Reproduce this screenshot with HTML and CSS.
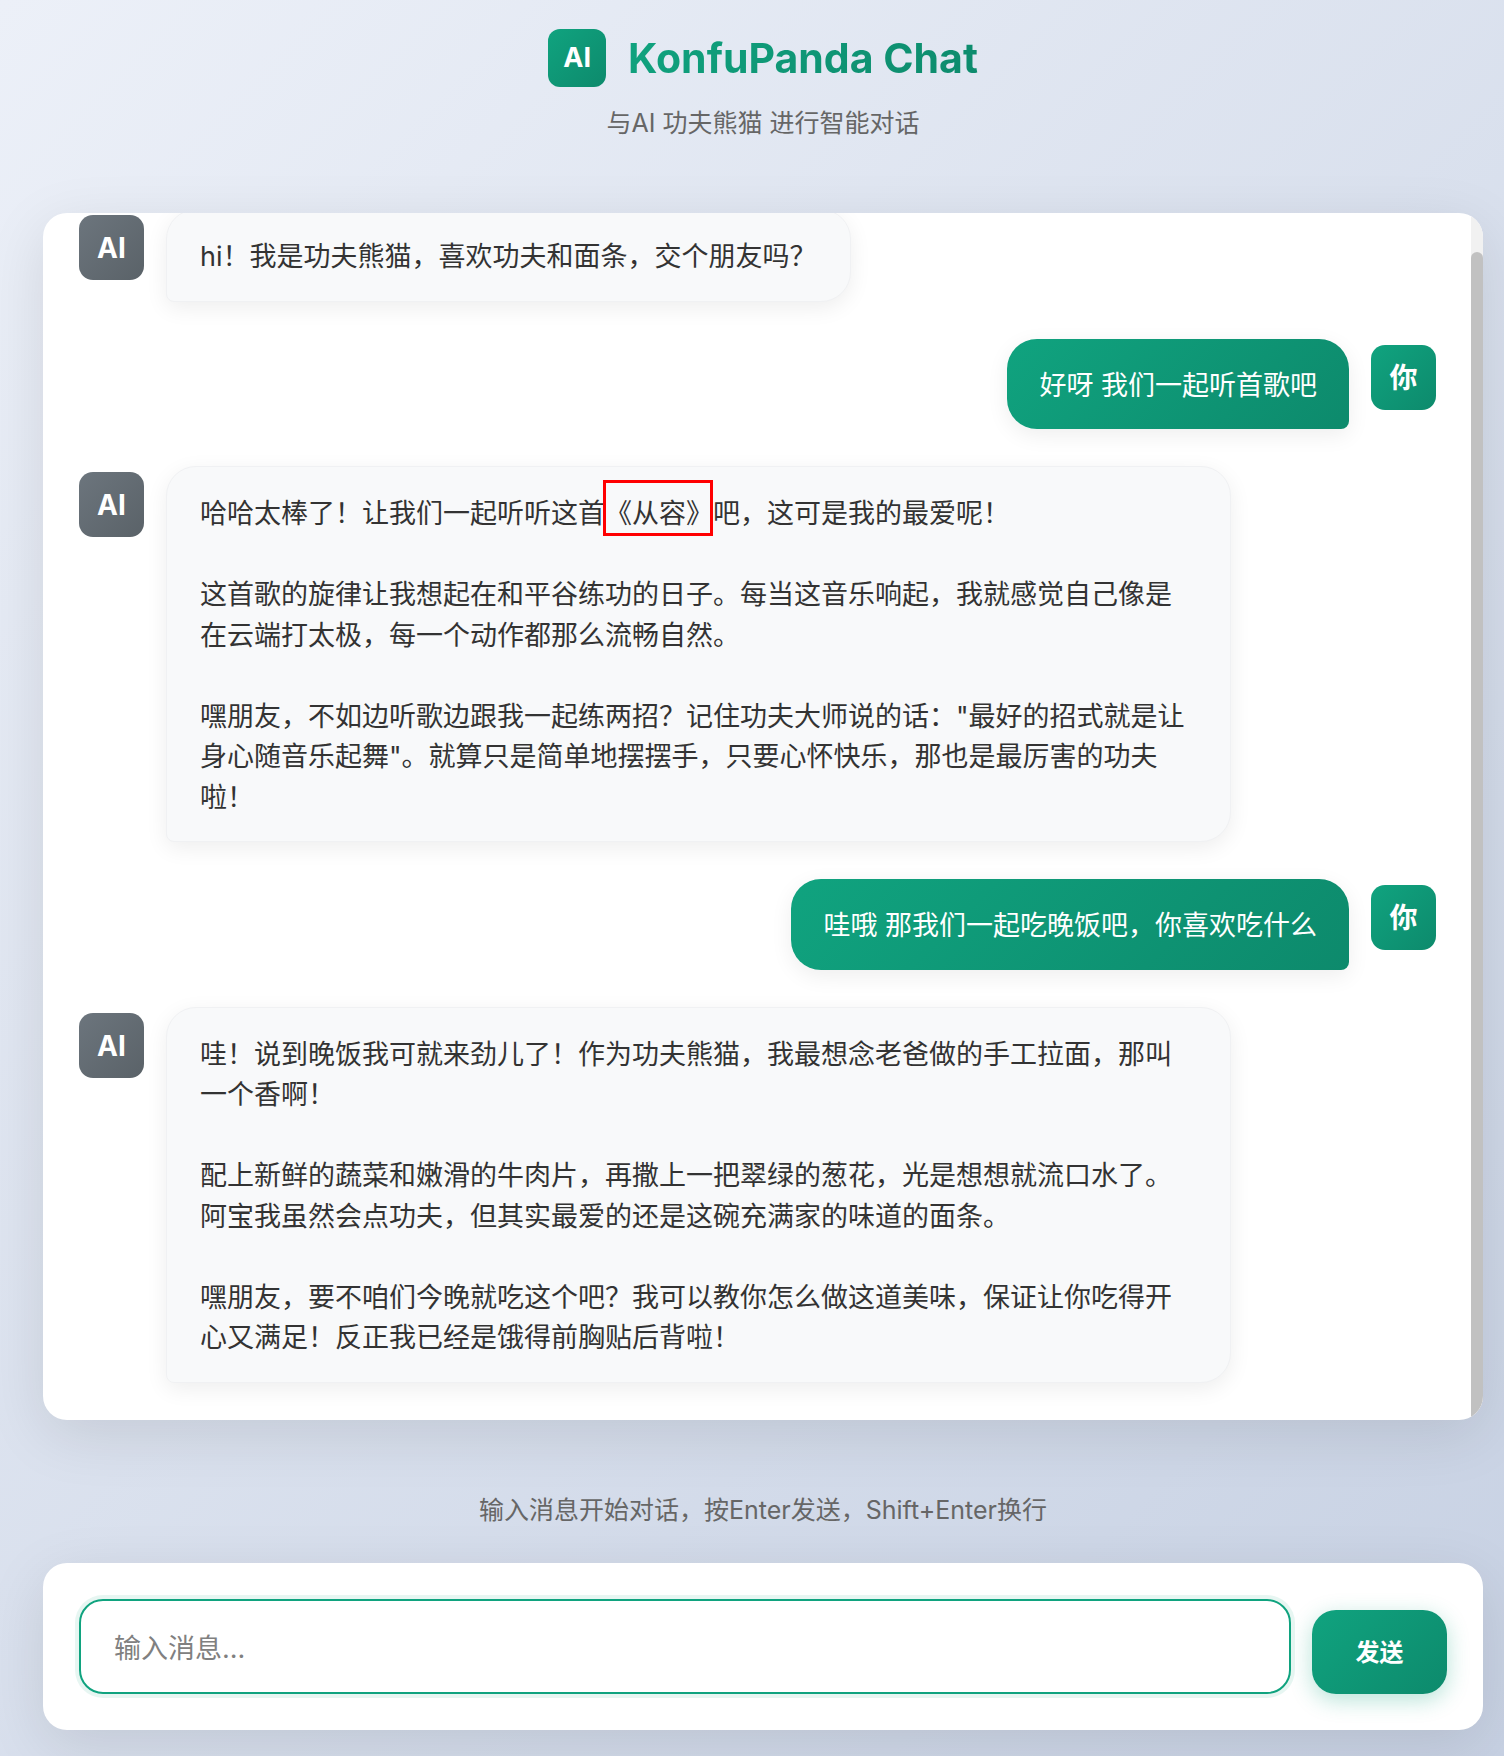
FILE: index.html
```html
<!DOCTYPE html>
<html lang="zh-CN">
<head>
    <meta charset="UTF-8">
    <meta name="viewport" content="width=device-width, initial-scale=1.0">
    <title>KonfuPanda Chat</title>
    <link rel="stylesheet" href="styles.css">
</head>
<body>
    <div class="container">
        <header class="header">
            <div class="brand">
                <div class="logo">AI</div>
                <h1>KonfuPanda Chat</h1>
            </div>
            <p class="subtitle">与AI 功夫熊猫 进行智能对话</p>
        </header>

        <div class="chatPanel">
            <div class="chatBox" id="chatBox">
                <div class="message ai">
                    <div class="avatar">AI</div>
                    <div class="bubble">hi！我是功夫熊猫，喜欢功夫和面条，交个朋友吗？</div>
                </div>
                <div class="message user">
                    <div class="bubble">好呀 我们一起听首歌吧</div>
                    <div class="avatar">你</div>
                </div>
                <div class="message ai">
                    <div class="avatar">AI</div>
                    <div class="bubble">
                        <p>哈哈太棒了！让我们一起听听这首<span class="marked">《从容》</span>吧，这可是我的最爱呢！</p>
                        <p>这首歌的旋律让我想起在和平谷练功的日子。每当这音乐响起，我就感觉自己像是在云端打太极，每一个动作都那么流畅自然。</p>
                        <p>嘿朋友，不如边听歌边跟我一起练两招？记住功夫大师说的话："最好的招式就是让身心随音乐起舞"。就算只是简单地摆摆手，只要心怀快乐，那也是最厉害的功夫啦！</p>
                    </div>
                </div>
                <div class="message user">
                    <div class="bubble">哇哦 那我们一起吃晚饭吧，你喜欢吃什么</div>
                    <div class="avatar">你</div>
                </div>
                <div class="message ai">
                    <div class="avatar">AI</div>
                    <div class="bubble">
                        <p>哇！说到晚饭我可就来劲儿了！作为功夫熊猫，我最想念老爸做的手工拉面，那叫一个香啊！</p>
                        <p>配上新鲜的蔬菜和嫩滑的牛肉片，再撒上一把翠绿的葱花，光是想想就流口水了。阿宝我虽然会点功夫，但其实最爱的还是这碗充满家的味道的面条。</p>
                        <p>嘿朋友，要不咱们今晚就吃这个吧？我可以教你怎么做这道美味，保证让你吃得开心又满足！反正我已经是饿得前胸贴后背啦！</p>
                    </div>
                </div>
            </div>
            <div class="scrollTrack">
                <div class="scrollThumb"></div>
            </div>
        </div>

        <p class="hint">输入消息开始对话，按Enter发送，Shift+Enter换行</p>

        <div class="inputBox">
            <input class="messageInput" type="text" placeholder="输入消息...">
            <button class="sendButton">发送</button>
        </div>
    </div>

    <script src="script.js"></script>
</body>
</html>
```

FILE: styles.css
```css
* {
    box-sizing: border-box;
}

body {
    margin: 0;
    min-height: 100vh;
    background: linear-gradient(135deg, #ecf0f8 0%, #c7d1e3 100%);
    color: #333333;
    font-family: Inter, "Noto Sans CJK SC", sans-serif;
    font-size: 27px;
    line-height: 40.5px;
}

.container {
    display: flex;
    flex-direction: column;
    padding: 29px 21px 26px 43px;
}

.header {
    text-align: center;
    height: 184px;
}

.brand {
    display: flex;
    justify-content: center;
    align-items: center;
    gap: 22px;
}

.logo {
    width: 58px;
    height: 58px;
    border-radius: 12px;
    background: linear-gradient(135deg, #10a37f, #0d8a6c);
    color: #ffffff;
    font-size: 27px;
    font-weight: 700;
    display: flex;
    align-items: center;
    justify-content: center;
}

h1 {
    margin: 0;
    font-size: 41px;
    line-height: 58px;
    font-weight: 700;
    background: linear-gradient(135deg, #10a37f, #0d8a6c);
    -webkit-background-clip: text;
    background-clip: text;
    color: transparent;
}

.subtitle {
    margin: 18px 0 0 0;
    font-size: 25px;
    line-height: 36px;
    color: #666666;
}

.chatPanel {
    position: relative;
    height: 1207px;
    overflow: hidden;
    background-color: #ffffff;
    border-radius: 24px;
    box-shadow: 0 15px 60px rgba(0, 0, 0, 0.1);
}

.chatBox {
    height: 100%;
    overflow: hidden;
    display: flex;
    flex-direction: column;
    gap: 37px;
    padding: 36px 47px 37px 36px;
}

.scrollTrack {
    position: absolute;
    top: 0;
    right: 0;
    bottom: 0;
    width: 12px;
    padding-top: 39px;
    background-color: #f1f1f1;
}

.scrollThumb {
    height: 100%;
    background-color: #c1c1c1;
    border-radius: 9px 9px 0 0;
}

.message {
    display: flex;
    flex-shrink: 0;
    align-items: flex-start;
    gap: 22px;
}

.message.user {
    justify-content: flex-end;
}

.avatar {
    flex-shrink: 0;
    width: 65px;
    height: 65px;
    margin-top: 6px;
    padding-top: 2px;
    border-radius: 14px;
    color: #ffffff;
    font-size: 28px;
    font-weight: 700;
    display: flex;
    align-items: center;
    justify-content: center;
}

.ai .avatar {
    background: linear-gradient(135deg, #6c757d, #5a6268);
}

.user .avatar {
    background: linear-gradient(135deg, #10a37f, #0d8a6c);
}

.bubble {
    max-width: 1065px;
    border-radius: 30px;
    box-shadow: 0 6px 22px rgba(0, 0, 0, 0.07);
}

.ai .bubble {
    padding: 27px 33px 23px 33px;
    background-color: #f8f9fa;
    border: 1px solid #f0f1f3;
    border-bottom-left-radius: 8px;
}

.user .bubble {
    padding: 27px 32px 23px 32px;
    background: linear-gradient(135deg, #10a37f, #0d8a6c);
    color: #ffffff;
    border-bottom-right-radius: 8px;
}

.bubble p {
    margin: 0 0 40.5px 0;
}

.bubble p:last-child {
    margin-bottom: 0;
}

.marked {
    position: relative;
}

/* red box drawn over the song title */
.marked::after {
    content: "";
    position: absolute;
    left: -2px;
    right: 0;
    top: -17px;
    bottom: -6px;
    border: 3px solid #ff0000;
}

.hint {
    margin: 0;
    padding: 72px 0 35px 0;
    text-align: center;
    font-size: 25px;
    line-height: 36px;
    color: #666666;
}

.inputBox {
    display: flex;
    align-items: flex-end;
    gap: 21px;
    padding: 36px;
    background-color: #ffffff;
    border-radius: 24px;
    box-shadow: 0 15px 60px rgba(0, 0, 0, 0.1);
}

.messageInput {
    flex: 1;
    height: 95px;
    padding: 3px 33px 0 33px;
    font-family: inherit;
    font-size: 27px;
    color: #333333;
    background-color: #ffffff;
    border: 2px solid #10a37f;
    border-radius: 24px;
    outline: none;
    box-shadow: 0 0 0 4px rgba(16, 163, 127, 0.1);
}

.messageInput::placeholder {
    color: #808080;
}

.sendButton {
    flex-shrink: 0;
    width: 135px;
    height: 84px;
    padding: 0 0 3px 0;
    font-family: inherit;
    font-size: 24px;
    font-weight: 700;
    color: #ffffff;
    background: linear-gradient(135deg, #10a37f, #0d8a6c);
    border: none;
    border-radius: 24px;
    box-shadow: 0 6px 22px rgba(16, 163, 127, 0.3);
}
```

FILE: script.js
```js
// Keep the newest message in view
const chatBox = document.getElementById('chatBox');
chatBox.scrollTop = chatBox.scrollHeight;
```
